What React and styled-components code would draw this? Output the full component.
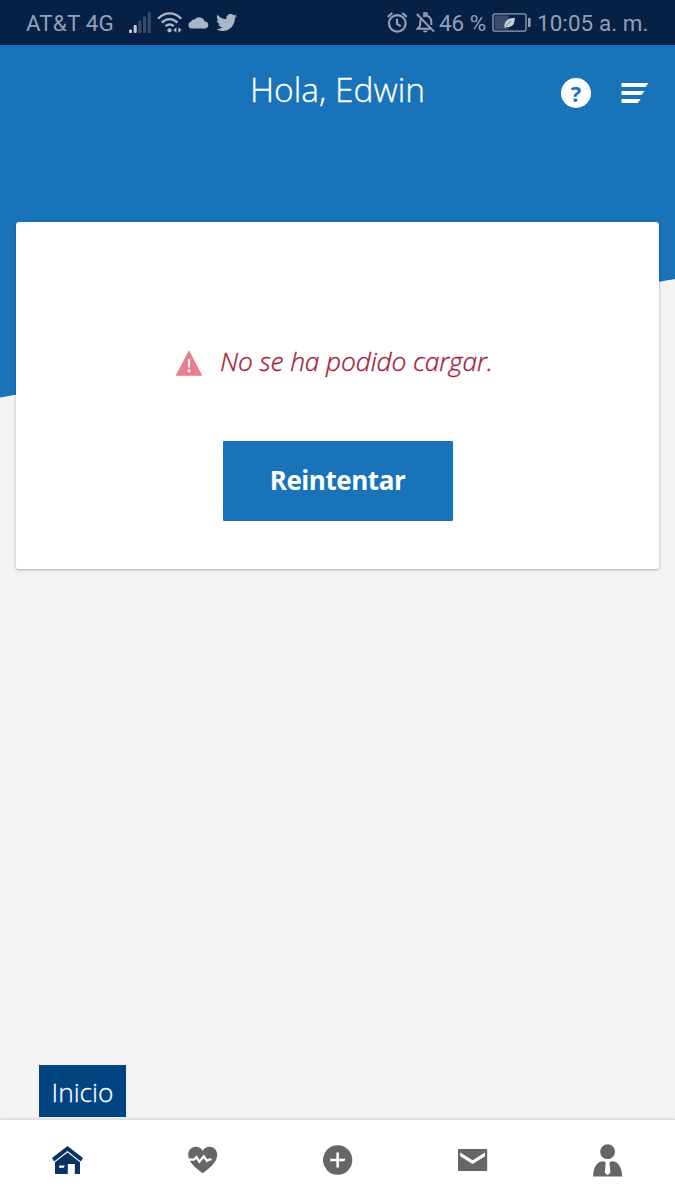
import React from 'react';
import styled, { createGlobalStyle } from 'styled-components';
import { FaTwitter } from 'react-icons/fa';

const GlobalStyle = createGlobalStyle`
	* {
		box-sizing: border-box;
	}
	body {
		margin: 0;
		background: #f3f3f3;
	}
	svg {
		display: block;
		flex: none;
	}
`;

const Screen = styled.div`
	width: 675px;
	height: 1200px;
	display: flex;
	flex-direction: column;
	overflow: hidden;
	font-family: 'Open Sans', 'Noto Sans', sans-serif;
	background: #f3f3f3;
`;

const StatusBar = styled.header`
	height: 45px;
	flex: none;
	display: flex;
	justify-content: space-between;
	padding: 0 26px;
	background: #072146;
	color: #929fb7;
	font-family: Roboto, sans-serif;
	font-size: 22.4px;
`;

const StatusGroup = styled.div`
	display: flex;
	align-items: center;
	height: 45px;
`;

const StatusText = styled.span`
	line-height: 45px;
	white-space: nowrap;
	width: ${(props) => props.$width}px;
	letter-spacing: ${(props) => props.$spacing || 0}px;
	margin-top: 2px;
`;

const StatusIcon = styled.span`
	margin-left: ${(props) => props.$gap}px;
`;

/* backdrop and page content share one grid cell */
const Main = styled.main`
	flex: 1;
	display: grid;
	grid-template: 1fr / 1fr;
	> * {
		grid-area: 1 / 1;
	}
`;

const Backdrop = styled.div`
	height: 353px;
	background: #1973b8;
	clip-path: polygon(0 0, 100% 0, 100% 234px, 0 352.5px);
`;

const Content = styled.div`
	display: flex;
	flex-direction: column;
	z-index: 1;
`;

const TopBar = styled.div`
	height: 177px;
	display: grid;
	grid-template-columns: 200px 1fr 200px;
	align-items: start;
`;

const Title = styled.h1`
	grid-column: 2;
	margin: 20px 0 0;
	text-align: center;
	font-size: 33.5px;
	line-height: 48px;
	font-weight: 300;
	color: #fff;
	-webkit-text-stroke: 0.3px #fff;
`;

const Actions = styled.div`
	display: flex;
	justify-content: flex-end;
	align-items: center;
	gap: 30px;
	height: 30px;
	margin: 33px 26px 0 0;
`;

const HelpButton = styled.button`
	width: 30px;
	height: 30px;
	padding: 0;
	border: 0;
	border-radius: 50%;
	background: #fff;
	color: #1973b8;
	font: 700 22px/29px 'Open Sans', sans-serif;
`;

const Card = styled.section`
	height: 347px;
	margin: 0 16px;
	padding-top: 115px;
	display: flex;
	flex-direction: column;
	align-items: center;
	background: #fff;
	border-radius: 3px;
	box-shadow: 0 1px 3px rgba(0, 0, 0, 0.3);
`;

const ErrorMessage = styled.p`
	display: flex;
	align-items: center;
	gap: 17px;
	width: 325px;
	height: 48px;
	margin: 0;
	white-space: nowrap;
	font-size: 26.3px;
	font-style: italic;
	font-weight: 300;
	letter-spacing: -0.1px;
	color: #a51c3a;
	-webkit-text-stroke: 0.35px #a51c3a;
	svg {
		margin-top: 3px;
	}
`;

const RetryButton = styled.button`
	width: 230px;
	height: 80px;
	margin: 56px 0 0;
	padding: 0 0 2px;
	border: 0;
	border-radius: 1px;
	background: #1973b8;
	color: #fff;
	font: 700 26px 'Open Sans', sans-serif;
	letter-spacing: -0.45px;
`;

const Tooltip = styled.div`
	align-self: flex-start;
	width: 87px;
	height: 52px;
	margin: auto 0 2px 39px;
	background: #004481;
	color: #fff;
	text-align: center;
	font-size: 26.3px;
	line-height: 54px;
	font-weight: 300;
	-webkit-text-stroke: 0.3px #fff;
`;

const TabBar = styled.nav`
	flex: none;
	height: 81px;
	display: grid;
	grid-template-columns: repeat(5, 1fr);
	background: #fff;
	border-top: 1px solid #dedede;
	box-shadow: 0 -1px 3px rgba(0, 0, 0, 0.08);
	z-index: 1;
`;

const Tab = styled.a`
	display: flex;
	align-items: center;
	justify-content: center;
	color: ${(props) => (props.$active ? '#0a3263' : '#666')};
`;

const SignalIcon = () => (
	<svg width="22" height="21" viewBox="0 0 22 21" fill="currentColor">
		<rect x="0" y="17.5" width="3" height="3.5" rx="1" fill="#c3cbd9" />
		<rect x="4.7" y="13" width="3" height="8" rx="1" fill="#c3cbd9" />
		<rect x="9.4" y="8.5" width="3" height="12.5" rx="1" opacity=".35" />
		<rect x="14.1" y="4.5" width="3" height="16.5" rx="1" opacity=".35" />
		<rect x="18.8" y="0" width="3" height="21" rx="1" opacity=".35" />
	</svg>
);

const WifiIcon = () => (
	<svg width="26" height="21" viewBox="0 0 26 21" fill="none" stroke="#aab5c8" strokeWidth="2.4">
		<path d="M1 6.8C7.8-.4 17.4-.4 24.2 6.8M4.8 10.6c4.7-4.6 10.9-4.6 15.6 0M8.4 14.2c2.7-2.3 5.7-2.3 8.4 0" />
		<circle cx="12.5" cy="18.3" r="2.1" fill="#aab5c8" stroke="none" />
		<path d="M19.4 15.4v5.4l-3.2-2.8zM21.3 15.4v5.4l3.4-2.8z" fill="#aab5c8" stroke="none" />
	</svg>
);

const CloudIcon = () => (
	<svg width="21" height="12" viewBox="0 0 21 12" fill="#aab5c8">
		<path d="M3.6 11.5A3.5 3.5 0 0 1 3.2 4.6C3.8 2.8 5.2 2.2 6.6 2.6A5.7 5.7 0 0 1 16.6 4.6 3.5 3.5 0 0 1 17.6 11.5z" />
	</svg>
);

const AlarmIcon = () => (
	<svg width="21" height="21" viewBox="0 0 21 21" fill="none" stroke="currentColor" strokeWidth="2.2">
		<circle cx="10.3" cy="11.4" r="8.3" />
		<path d="M10 6.8v5l3.7 2.4M.8 4.8 5.3 1M19.8 4.8 15.3 1" />
	</svg>
);

const BellOffIcon = () => (
	<svg width="19" height="21" viewBox="0 0 19 21" fill="none" stroke="currentColor" strokeWidth="2">
		<path d="M.8 2 18 19.6M5.2 6.4C3.8 9 4.4 12 3.8 14.4L1.6 16.7H15M7 4.3C12 2.2 15.3 5.6 15.3 10v3" />
		<path d="M8.2 3.7V1.2h2.5v2.5" />
		<path d="M7 18.6h4.8a2.4 2 0 0 1-4.8 0z" fill="currentColor" stroke="none" />
	</svg>
);

const BatteryIcon = () => (
	<svg width="39" height="19" viewBox="0 0 39 19">
		<rect x="1" y=".8" width="33" height="17.4" rx="1.8" fill="none" stroke="currentColor" strokeWidth="1.3" />
		<rect x="2.6" y="2.4" width="14" height="14.2" fill="#3a4d6c" />
		<rect x="36" y="5" width="2.6" height="9" rx=".8" fill="currentColor" />
		<path d="M12.4 14.2C12 8.4 15.5 5.2 22.7 4.7c.4 6-2.2 10.2-7.8 9.2l-1.7 1.2z" fill="#c9d0dc" />
		<path d="M13.8 13.6c1.8-2.6 3.4-4 5.6-5.3" stroke="#3a4d6c" strokeWidth=".6" fill="none" />
	</svg>
);

const MenuIcon = () => (
	<svg width="28" height="20" viewBox="0 0 28 20" fill="#fff">
		<path d="M.5 0H27.5L24.4 4H.5zM.5 8H23.5L20.5 12H.5zM.5 16H19.8L16.7 20H.5z" />
	</svg>
);

const WarningIcon = () => (
	<svg width="28" height="26" viewBox="0 0 28 26">
		<path d="M14 .3 27.4 25.8H.6z" fill="#e77d8e" />
		<path d="M12.8 9.3h2.5l-.4 8.2h-1.7z" fill="#fff" />
		<circle cx="14" cy="20.8" r="1.6" fill="#fff" />
	</svg>
);

const HomeIcon = () => (
	<svg width="31" height="28" viewBox="0 0 31 28" fill="currentColor">
		<path d="M15.5 0 31 12 28.8 15.4 15.5 5 2.2 15.4 0 12z" />
		<path d="M15.5 6.6 28 16.2V28H22.800V18H15.800V28H3V16.200z" />
		<path d="M7.2 19.4h5.6l-1 2.3H7.2z" fill="#fff" />
	</svg>
);

const HeartIcon = () => (
	<svg width="30" height="28" viewBox="0.3 0 30 28">
		<path d="M15 27.3C9 22.7.5 16.5.5 8.7.5 3.8 4 .7 8 .7c3 0 5.5 1.6 7 4 1.5-2.4 4-4 7-4 4 0 7.5 3.1 7.5 8C29.5 16.5 21 22.7 15 27.3z" fill="currentColor" />
		<path d="M1 13.6h5.4L8.800 11 11.600 15.800l4.500-5.400 3.200 4.600 2-1.500h2.600" fill="none" stroke="#fff" strokeWidth="2.2" />
	</svg>
);

const PlusIcon = () => (
	<svg width="30" height="30" viewBox="0.4 0 30 30">
		<circle cx="15" cy="15" r="14.7" fill="currentColor" />
		<path d="M13.8 7.5h2.5v6.3h6.6l-1.2 2.5h-5.4v6.3h-2.5v-6.3H7.5v-2.5h6.3z" fill="#fff" />
	</svg>
);

const MailIcon = () => (
	<svg width="30" height="22" viewBox="0.4 0 30 22">
		<rect x=".4" width="29.2" height="22" rx="1" fill="currentColor" />
		<path d="M2.6 3.6 15 11.2 27.4 3.6V7.2L15 15 2.6 7.2z" fill="#fff" />
	</svg>
);

const PersonIcon = () => (
	<svg width="30" height="33" viewBox="0.4 0 30 33" fill="currentColor">
		<circle cx="15" cy="7.7" r="7.4" />
		<path d="M.5 32.5C.5 23.5 4.5 17.3 10.5 17.3L13.2 18.2 12.2 28.7 15 31.2 17.8 28.7 16.8 18.2 19.5 17.3C25.5 17.3 29.5 23.5 29.5 32.5z" />
	</svg>
);

const tabs = [
	{ name: 'home', Icon: HomeIcon, active: true },
	{ name: 'health', Icon: HeartIcon },
	{ name: 'add', Icon: PlusIcon },
	{ name: 'mail', Icon: MailIcon },
	{ name: 'profile', Icon: PersonIcon },
];

export default function App() {
	return (
		<Screen>
			<GlobalStyle />
			<StatusBar>
				<StatusGroup>
					<StatusText $width={88} $spacing={0.15}>AT&amp;T 4G</StatusText>
					<StatusIcon $gap={15}><SignalIcon /></StatusIcon>
					<StatusIcon $gap={6}><WifiIcon /></StatusIcon>
					<StatusIcon $gap={5}><CloudIcon /></StatusIcon>
					<StatusIcon $gap={7}><FaTwitter size={21} color="#aab5c8" /></StatusIcon>
				</StatusGroup>
				<StatusGroup>
					<StatusIcon><AlarmIcon /></StatusIcon>
					<StatusIcon $gap={8}><BellOffIcon /></StatusIcon>
					<StatusIcon $gap={4} />
					<StatusText $width={48}>46 %</StatusText>
					<StatusIcon $gap={5}><BatteryIcon /></StatusIcon>
					<StatusIcon $gap={6} />
					<StatusText $width={112} $spacing={0.1}>10:05 a. m.</StatusText>
				</StatusGroup>
			</StatusBar>
			<Main>
				<Backdrop />
				<Content>
					<TopBar>
						<Title>Hola, Edwin</Title>
						<Actions>
							<HelpButton>?</HelpButton>
							<MenuIcon />
						</Actions>
					</TopBar>
					<Card>
						<ErrorMessage>
							<WarningIcon />
							No se ha podido cargar.
						</ErrorMessage>
						<RetryButton>Reintentar</RetryButton>
					</Card>
					<Tooltip>Inicio</Tooltip>
				</Content>
			</Main>
			<TabBar>
				{tabs.map(({ name, Icon, active }) => (
					<Tab key={name} $active={active}>
						<Icon />
					</Tab>
				))}
			</TabBar>
		</Screen>
	);
}
